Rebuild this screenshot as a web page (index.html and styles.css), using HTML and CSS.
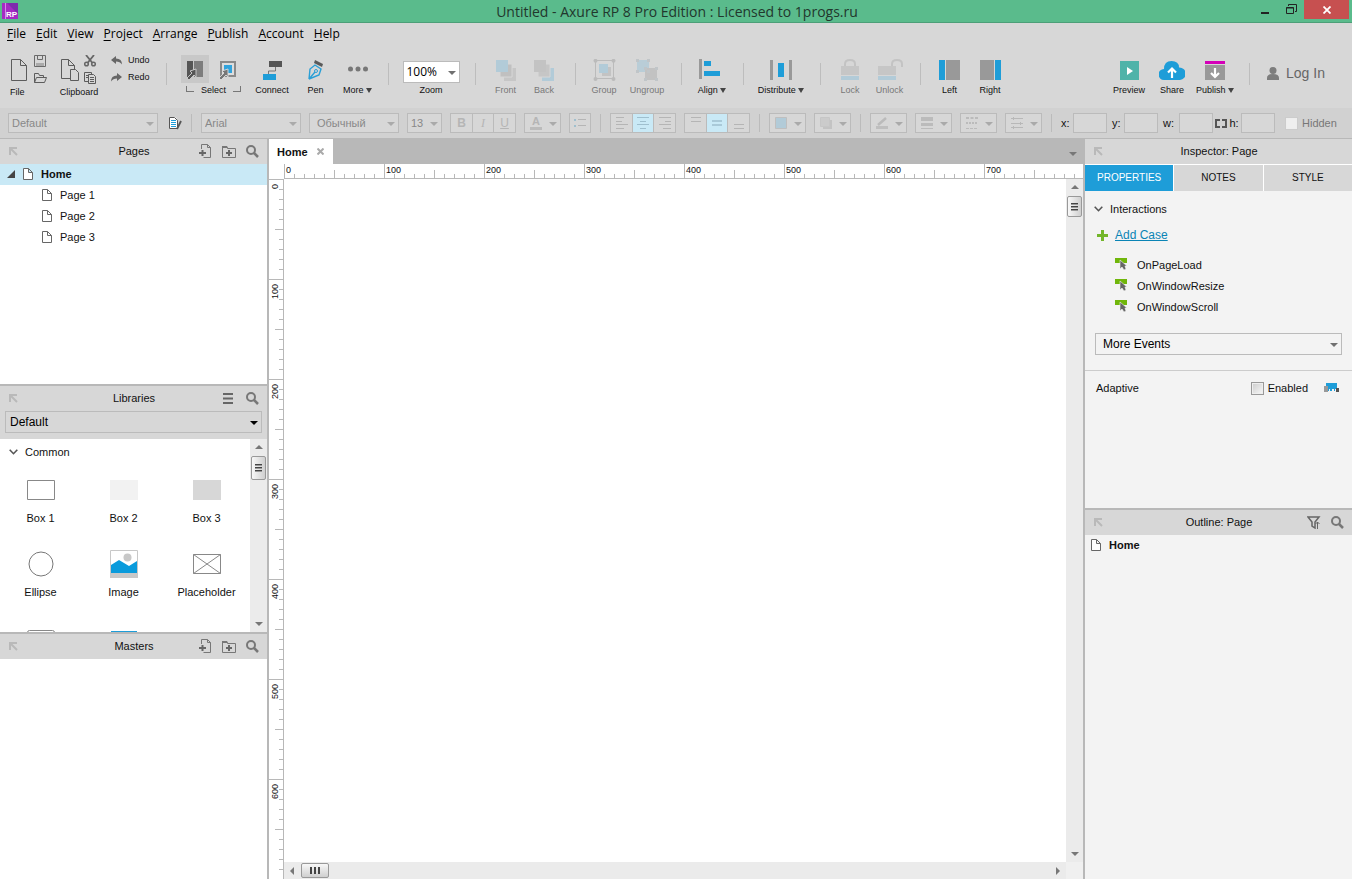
FILE: index.html
```html
<!DOCTYPE html>
<html lang="en">
<head>
<meta charset="utf-8">
<title>Untitled - Axure RP 8 Pro Edition</title>
<link rel="stylesheet" href="styles.css">
</head>
<body>
<svg class="sprite" aria-hidden="true">
  <symbol id="pin" viewBox="0 0 9 9"><path d="M1 8V1h7M1.500 1.500L8 8" fill="none" stroke="#b9b9b9" stroke-width="2"/></symbol>
  <symbol id="page" viewBox="0 0 10 12"><path d="M.5.5h5l4 4v7h-9zM5.5.5v4h4" fill="#fff" stroke="#666"/></symbol>
  <symbol id="addpage" viewBox="0 0 13 14"><path d="M2.500 5V.5h6l3 3v10h-7M8.500.5v3h3" fill="none" stroke="#777"/><path d="M0 9h7M3.500 6v6" stroke="#666" stroke-width="2"/></symbol>
  <symbol id="addfolder" viewBox="0 0 14 13"><path d="M.5 12.500V1.500h4l1 2h8v9z" fill="none" stroke="#777"/><path d="M0 1h5l1 2H0z" fill="#777"/><path d="M4 8h6M7 5v6" stroke="#666" stroke-width="2"/></symbol>
  <symbol id="search" viewBox="0 0 13 13"><circle cx="5" cy="5" r="4" fill="none" stroke="#777" stroke-width="2"/><path d="M8 8l4 4" stroke="#777" stroke-width="2.500"/></symbol>
  <symbol id="chev" viewBox="0 0 9 6"><path d="M.7.7l3.800 4 3.800-4" fill="none" stroke="#555" stroke-width="1.600"/></symbol>
  <symbol id="event" viewBox="0 0 13 13"><path d="M0 0h12v5H0z" fill="#70b60a"/><path d="M5 2v9l2-2 2 3 2-1-1-3h2z" fill="#666" stroke="#f3f3f3" stroke-width=".6"/></symbol>
</svg>

<header class="titlebar">
  <svg class="logo" width="16" height="16" viewBox="0 0 16 16"><path d="M0 0h16v16H0z" fill="#a52ac4"/><path d="M5 0h11v11z" fill="#7e2bad"/><path d="M3 0h1v16H3z" fill="#d58be5"/><text class="logo-text" x="4" y="14">RP</text></svg>
  <h1 class="title">Untitled - Axure RP 8 Pro Edition : Licensed to 1progs.ru</h1>
  <div class="window-buttons">
    <button class="winbtn" aria-label="Minimize"><svg width="8" height="12"><path d="M0 8h8v2H0z" fill="#222"/></svg></button>
    <button class="winbtn" aria-label="Restore"><svg width="11" height="11"><path d="M2.500 2V.500h8v7H9M.5 3.500h7v6h-7zM.5 4h7" fill="none" stroke="#222"/></svg></button>
    <button class="winbtn close" aria-label="Close"><svg width="8" height="8"><path d="M.5.5l7 7m0-7l-7 7" stroke="#fff" stroke-width="1.800"/></svg></button>
  </div>
</header>

<nav class="menubar">
  <button><u>F</u>ile</button><button><u>E</u>dit</button><button><u>V</u>iew</button><button><u>P</u>roject</button><button><u>A</u>rrange</button><button><u>P</u>ublish</button><button><u>A</u>ccount</button><button><u>H</u>elp</button>
</nav>

<div class="toolbar">
  <div class="group file">
    <div class="group-icons">
      <button aria-label="New"><svg width="18" height="24"><path d="M1.500 1.500h9l6 6v15h-15zM10.500 1.500v6h6" fill="none" stroke="#5c5c5c"/></svg></button>
      <div class="pair">
        <button aria-label="Save"><svg width="14" height="12"><path d="M1.500.5h11v11h-11zM4.500.5v4h5v-4" fill="none" stroke="#6a6a6a"/><path d="M3 8h8v3H3z" fill="#aaa"/></svg></button>
        <button aria-label="Open"><svg width="14" height="12"><path d="M1.500 10.500v-9h4l1 2h4v2M1.500 10.500l2-5h10l-2 5z" fill="none" stroke="#5c5c5c"/></svg></button>
      </div>
    </div>
    <span>File</span>
  </div>
  <div class="group">
    <div class="group-icons">
      <button aria-label="Paste"><svg width="18" height="24"><path d="M9.500 20.500h-9v-19h7l6 6v4M7.500 1.500v6h6M9.500 11.500h5l3 3v8h-8z" fill="none" stroke="#5c5c5c"/></svg></button>
      <div class="pair">
        <button aria-label="Cut"><svg width="14" height="12"><path d="M3 0l6.500 8M11 0L4.500 8" stroke="#666" stroke-width="1.800"/><circle cx="3.500" cy="9" r="1.800" fill="none" stroke="#666" stroke-width="1.500"/><circle cx="10.500" cy="9" r="1.800" fill="none" stroke="#666" stroke-width="1.500"/></svg></button>
        <button aria-label="Copy"><svg width="14" height="12"><path d="M5 9.500H1.500v-9h7V3M5.500 2.500h5l2 2v7h-7zM7 5.500h4M7 7.500h4M7 9.500h4M3 3.500h2M3 5.500h2" fill="none" stroke="#5c5c5c"/></svg></button>
      </div>
    </div>
    <span>Clipboard</span>
  </div>
  <div class="history">
    <button><svg width="12" height="9"><path d="M0 4l5-4v2.500q6 0 6 6Q9 5.500 5 5.500V8z" fill="#666"/></svg>Undo</button>
    <button><svg width="12" height="9"><path d="M11 4L6 0v2.500q-6 0-6 6Q2 5.500 6 5.500V8z" fill="#666"/></svg>Redo</button>
  </div>
  <i class="sep"></i>
  <div class="select-tools">
    <div class="select-icons">
      <button class="picked" aria-label="Select intersected"><svg width="18" height="22"><path d="M1 3h6v16H1z" fill="#555"/><path d="M8 3h9v16H8z" fill="#7d7d7d"/><path d="M10 11v8l-2-2-5 5-2-2 5-5-2-2z" fill="#555" stroke="#d0d0d0" stroke-width=".9"/></svg></button>
      <button aria-label="Select contained"><svg width="18" height="22"><path d="M2 3h16v16H2z" fill="#8a8a8a"/><path d="M4 5h12v12H4z" fill="#ddd"/><path d="M6 7h8v8H6z" fill="#31a3dc"/><path d="M10 11v8l-2-2-5 5-2-2 5-5-2-2z" fill="#777" stroke="#ddd" stroke-width=".9"/></svg></button>
    </div>
    <div class="select-label"><i class="hook left"></i><span>Select</span><i class="hook right"></i></div>
  </div>
  <button class="tool"><svg width="20" height="22"><path d="M7 2h13v6H7z" fill="#555"/><path d="M13.500 8v4h-7v3" fill="none" stroke="#777"/><path d="M1 15h13v6H1z" fill="#1e9dd8"/></svg>Connect</button>
  <button class="tool"><svg width="18" height="22"><path d="M8 1l8 4-1 3-8-4z" fill="#5a5a5a"/><path d="M2 20l1-10 5-4 6 4-2 6-10 4 6-7" fill="none" stroke="#2a9fd6" stroke-width="1.400"/><circle cx="9" cy="12" r="1.500" fill="none" stroke="#2a9fd6"/></svg>Pen</button>
  <button class="tool"><svg width="22" height="22"><g fill="#777"><circle cx="3.500" cy="10" r="2.500"/><circle cx="11" cy="10" r="2.500"/><circle cx="18.500" cy="10" r="2.500"/></g></svg><span>More <i class="down"></i></span></button>
  <i class="sep"></i>
  <div class="zoom"><span class="pick dark"><select id="zoom"><option>100%</option></select></span><label for="zoom">Zoom</label></div>
  <i class="sep"></i>
  <button class="tool" disabled><svg width="20" height="22"><path d="M8 9h12v13H8z" fill="#c6c6c6"/><path d="M4 5h12v13H4z" fill="#c0c0c0" stroke="#d7d7d7"/><path d="M0 1h12v12H0z" fill="#b2cbd8"/></svg>Front</button>
  <button class="tool" disabled><svg width="20" height="22"><path d="M8 9h12v13H8z" fill="#b2cbd8"/><path d="M4 5h12v13H4z" fill="#c6c6c6" stroke="#d7d7d7"/><path d="M0 1h12v12H0z" fill="#c3c3c3"/></svg>Back</button>
  <i class="sep"></i>
  <button class="tool" disabled><svg width="24" height="22"><path d="M3.500 1.500h18v18h-18z" fill="none" stroke="#bbb"/><path d="M10 8h9v9h-9z" fill="#c3c3c3"/><path d="M7 5h9v9H7z" fill="#b2cbd8"/><g fill="#bbb"><circle cx="3.500" cy="1.800" r="2"/><circle cx="21.500" cy="1.800" r="2"/><circle cx="3.500" cy="20" r="2"/><circle cx="21.500" cy="20" r="2"/></g></svg>Group</button>
  <button class="tool" disabled><svg width="24" height="22"><path d="M2 1h12v12H2z" fill="#b9cdd7"/><path d="M10 9h12v12H10z" fill="#c2c2c2"/><path d="M1 0h3v3H1zM12 0h3v3h-3zM1 11h3v3H1zM12 11h3v3h-3zM9 8h3v3H9zM20 8h3v3h-3zM9 19h3v3H9zM20 19h3v3h-3z" fill="#c0c5c8"/></svg>Ungroup</button>
  <i class="sep"></i>
  <button class="tool"><svg width="26" height="22"><path d="M0 0h3v20H0z" fill="#999"/><path d="M5 2h7v5H5zM5 12h16v5H5z" fill="#1e9dd8"/></svg><span>Align <i class="down"></i></span></button>
  <i class="sep"></i>
  <button class="tool"><svg width="22" height="22"><path d="M0 1h3v20H0zM19 1h3v20h-3z" fill="#999"/><path d="M8 4h6v14H8z" fill="#1e9dd8"/></svg><span>Distribute <i class="down"></i></span></button>
  <i class="sep"></i>
  <button class="tool" disabled><svg width="18" height="22"><path d="M4 7V5q0-4 5-4t5 4v2" fill="none" stroke="#c3c3c3" stroke-width="2"/><path d="M0 7h18v9H0z" fill="#c6c6c6"/><path d="M0 17h18v4H0z" fill="#b2cbd8"/></svg>Lock</button>
  <button class="tool" disabled><svg width="26" height="22"><path d="M15 7V5q0-4 5-4t5 4v3" fill="none" stroke="#c3c3c3" stroke-width="2"/><path d="M1 7h18v9H1z" fill="#c6c6c6"/><path d="M1 17h18v4H1z" fill="#b2cbd8"/></svg>Unlock</button>
  <i class="sep"></i>
  <button class="tool"><svg width="21" height="22"><path d="M0 1h6v20H0z" fill="#1e9dd8"/><path d="M7 1h14v20H7z" fill="#999"/></svg>Left</button>
  <button class="tool"><svg width="21" height="22"><path d="M15 1h6v20h-6z" fill="#1e9dd8"/><path d="M0 1h14v20H0z" fill="#999"/></svg>Right</button>
  <span></span>
  <button class="tool"><svg width="19" height="22"><path d="M0 2h19v19H0z" fill="#4fb3a9"/><path d="M7 8l6 4-6 4z" fill="#fff"/></svg>Preview</button>
  <button class="tool"><svg width="26" height="22"><path d="M5 21a5.500 5.500 0 0 1 0-11Q5 2 12.500 2T20 8.500a6 6 0 0 1 1 12.500z" fill="#1e9dd8"/><path d="M13 19v-9M9 13.500l4-4 4 4" fill="none" stroke="#fff" stroke-width="2.200"/></svg>Share</button>
  <button class="tool"><svg width="20" height="22"><path d="M0 2h20v3H0z" fill="#d400b8"/><path d="M0 6h20v15H0z" fill="#999"/><path d="M10 9v9M6 14l4 4 4-4" fill="none" stroke="#fff" stroke-width="2.200"/></svg><span>Publish <i class="down"></i></span></button>
  <i class="sep"></i>
  <button class="login"><svg width="12" height="13"><circle cx="6" cy="3.500" r="3.500" fill="#7d7d7d"/><path d="M0 13v-2q0-4 6-4t6 4v2z" fill="#7d7d7d"/></svg>Log In</button>
</div>

<div class="formatbar">
  <span class="pick w150"><select aria-label="Style" disabled><option>Default</option></select></span>
  <button class="style-edit" aria-label="Style manager"><svg width="14" height="14"><path d="M1 1h6l2 2v10H1z" fill="#fff"/><path d="M3 4h5v1H3zM3 6h5v1H3zM3 8h5v1H3zM3 10h5v1H3z" fill="#1e9dd8"/><path d="M1.500 1.500h5l3 3v8h-8z" fill="none" stroke="#555"/><path d="M13 5l-4 8" stroke="#555" stroke-width="1.800"/></svg></button>
  <i class="bar"></i>
  <span class="pick w100"><select aria-label="Font" disabled><option>Arial</option></select></span>
  <span class="pick w90 indent"><select aria-label="Weight" disabled><option>Обычный</option></select></span>
  <span class="pick w35"><select aria-label="Size" disabled><option>13</option></select></span>
  <div class="segment">
    <button disabled aria-label="Bold"><b>B</b></button><button disabled aria-label="Italic"><i class="italic">I</i></button><button disabled aria-label="Underline"><u>U</u></button>
  </div>
  <button class="drop" disabled aria-label="Text colour"><span class="fontcolor">A</span></button>
  <div class="segment single"><button disabled aria-label="Bullets"><svg width="12" height="10"><path d="M0 1h2v2H0zM0 7h2v2H0z" fill="#9fbfce"/><path d="M4 1.500h8M4 7.500h8" stroke="#b5b5b5"/></svg></button></div>
  <i class="bar"></i>
  <div class="segment">
    <button disabled aria-label="Align left"><svg width="12" height="12"><path d="M0 .5h8M0 4.500h6M0 7.500h12M0 11.500h8" stroke="#b5b5b5"/></svg></button><button class="on" disabled aria-label="Align centre"><svg width="12" height="12"><path d="M0 .5h12M3 4.500h6M0 7.500h12M3 11.500h6" stroke="#9fbfce"/></svg></button><button disabled aria-label="Align right"><svg width="12" height="12"><path d="M0 .5h12M6 4.500h6M0 7.500h12M4 11.500h8" stroke="#b5b5b5"/></svg></button>
  </div>
  <div class="segment">
    <button disabled aria-label="Align top"><svg width="12" height="12"><path d="M1 .5h10M1 4.500h10" stroke="#b5b5b5"/></svg></button><button class="on" disabled aria-label="Align middle"><svg width="12" height="12"><path d="M1 4h10M1 8h10" stroke="#9fbfce" stroke-width="1.500"/></svg></button><button disabled aria-label="Align bottom"><svg width="12" height="12"><path d="M1 7.500h10M1 11.500h10" stroke="#b5b5b5"/></svg></button>
  </div>
  <i class="bar"></i>
  <button class="drop" disabled aria-label="Fill"><svg width="12" height="12"><path d="M.5.5h11v11H.5z" fill="#b2cbd8" stroke="#bfbfbf"/></svg></button>
  <button class="drop" disabled aria-label="Shadow"><svg width="12" height="12"><path d="M3 3h9v9H3z" fill="#c3c3c3"/><path d="M.5.5h9v9h-9z" fill="#cbcbcb" stroke="#c6c6c6"/></svg></button>
  <i class="bar"></i>
  <button class="drop" disabled aria-label="Line colour"><svg width="12" height="12"><path d="M2 8l8-7" stroke="#bbb" stroke-width="2.500"/><path d="M0 9h12v3H0z" fill="#bfbfbf"/></svg></button>
  <button class="drop" disabled aria-label="Line width"><svg width="12" height="12"><path d="M0 0h12v4H0zM0 6h12v3H0zM0 11h12v1H0z" fill="#bbb"/></svg></button>
  <button class="drop" disabled aria-label="Line style"><svg width="12" height="12"><path d="M0 1h12" stroke="#bbb" stroke-width="2" stroke-dasharray="3 1.500"/><path d="M0 6h12" stroke="#bbb" stroke-width="2" stroke-dasharray="2 1"/><path d="M0 11.500h12" stroke="#bbb" stroke-dasharray="3 1"/></svg></button>
  <button class="drop" disabled aria-label="Arrow style"><svg width="12" height="12"><path d="M0 1.500h12M0 6.500h12M0 10.500h12M2.500 0v3M9.500 5v3M2.500 9v3" stroke="#b8b8b8"/></svg></button>
  <i class="bar"></i>
  <label class="coord">x:<input type="text" disabled></label>
  <label class="coord">y:<input type="text" disabled></label>
  <label class="coord">w:<input type="text" disabled></label>
  <label class="coord linked"><svg width="12" height="9"><path d="M5 1H1v7h4M7 1h4v7H7" fill="none" stroke="#555" stroke-width="2"/></svg>h:<input type="text" disabled></label>
  <label class="hidden-check"><input type="checkbox" class="box plain" disabled>Hidden</label>
</div>

<main class="workspace">
  <aside class="side left-side">
    <section class="panel pages">
      <header class="panel-head"><svg width="9" height="9"><use href="#pin"/></svg><h2>Pages</h2>
        <div class="actions"><button aria-label="Add page"><svg width="13" height="14"><use href="#addpage"/></svg></button><button aria-label="Add folder"><svg width="14" height="13"><use href="#addfolder"/></svg></button><button aria-label="Search pages"><svg width="13" height="13"><use href="#search"/></svg></button></div>
      </header>
      <ul class="tree">
        <li class="row root"><svg width="8" height="8"><path d="M8 0v8H0z" fill="#444"/></svg><svg width="10" height="12"><use href="#page"/></svg>Home</li>
        <li class="row child"><svg width="10" height="12"><use href="#page"/></svg>Page 1</li>
        <li class="row child"><svg width="10" height="12"><use href="#page"/></svg>Page 2</li>
        <li class="row child"><svg width="10" height="12"><use href="#page"/></svg>Page 3</li>
      </ul>
    </section>
    <section class="panel libraries">
      <header class="panel-head"><svg width="9" height="9"><use href="#pin"/></svg><h2>Libraries</h2>
        <div class="actions wide"><button aria-label="Library options"><svg width="10" height="11"><path d="M0 1h10M0 5.500h10M0 10h10" stroke="#666" stroke-width="2"/></svg></button><button aria-label="Search libraries"><svg width="13" height="13"><use href="#search"/></svg></button></div>
      </header>
      <div class="library-pick"><span class="pick black"><select aria-label="Library"><option>Default</option></select></span></div>
      <div class="library-body">
        <div class="widgets">
          <h3><svg width="9" height="6"><use href="#chev"/></svg>Common</h3>
          <ul class="widget-grid">
            <li><svg width="28" height="28"><path d="M.5 4.500h27v19H.5z" fill="#fff" stroke="#888"/></svg>Box 1</li>
            <li><svg width="28" height="28"><path d="M0 4h28v20H0z" fill="#f2f2f2"/></svg>Box 2</li>
            <li><svg width="28" height="28"><path d="M0 4h28v20H0z" fill="#d7d7d7"/></svg>Box 3</li>
            <li><svg width="28" height="28"><circle cx="14" cy="14" r="12" fill="#fff" stroke="#777"/></svg>Ellipse</li>
            <li><svg width="28" height="28"><path d="M.5.5h27v27H.5z" fill="#fff" stroke="#c8c8c8"/><circle cx="17.500" cy="7.500" r="4" fill="#c8c8c8"/><path d="M1 15l8-5 10 6 8-5v12H1z" fill="#0a9bdc"/><path d="M0 23h28v5H0z" fill="#c8c8c8"/></svg>Image</li>
            <li><svg width="28" height="28"><path d="M.5 4.500h27v19H.5zM.5 4.500l27 19M27.500 4.500l-27 19" fill="none" stroke="#888"/></svg>Placeholder</li>
            <li><svg width="28" height="28"><rect x=".5" y="6.500" width="27" height="19" rx="2" fill="#fff" stroke="#888"/></svg></li>
            <li><svg width="28" height="28"><path d="M1 7h26v19H1z" fill="#1e9dd8"/></svg></li>
          </ul>
        </div>
        <div class="vscroll"><i class="arrow up"></i><i class="thumb"></i><i class="arrow dn"></i></div>
      </div>
    </section>
    <section class="panel masters">
      <header class="panel-head"><svg width="9" height="9"><use href="#pin"/></svg><h2>Masters</h2>
        <div class="actions"><button aria-label="Add master"><svg width="13" height="14"><use href="#addpage"/></svg></button><button aria-label="Add master folder"><svg width="14" height="13"><use href="#addfolder"/></svg></button><button aria-label="Search masters"><svg width="13" height="13"><use href="#search"/></svg></button></div>
      </header>
    </section>
  </aside>

  <section class="editor">
    <div class="tabs"><div class="tab">Home<button aria-label="Close tab"><svg width="7" height="7"><path d="M.5.5l6 6m0-6l-6 6" stroke="#aaa" stroke-width="2"/></svg></button></div><button class="tab-menu" aria-label="Open tabs"><i class="arrow dn"></i></button></div>
    <div class="hruler"><span>0</span><span>100</span><span>200</span><span>300</span><span>400</span><span>500</span><span>600</span><span>700</span></div>
    <div class="board">
      <div class="vruler"><span>0</span><span>100</span><span>200</span><span>300</span><span>400</span><span>500</span><span>600</span></div>
      <div class="canvas"></div>
      <div class="vscroll"><i class="arrow up"></i><i class="thumb short"></i><i class="arrow dn"></i></div>
      <div class="hscroll"><i class="arrow lt"></i><i class="thumb"></i><i class="arrow rt"></i></div>
    </div>
  </section>

  <aside class="side right-side">
    <section class="panel inspector">
      <header class="panel-head"><svg width="9" height="9"><use href="#pin"/></svg><h2>Inspector: Page</h2></header>
      <div class="inspector-tabs"><button class="active">PROPERTIES</button><button>NOTES</button><button>STYLE</button></div>
      <div class="interactions">
        <h3><svg width="9" height="6"><use href="#chev"/></svg>Interactions</h3>
        <div class="add"><svg width="11" height="11"><path d="M0 5.500h11M5.500 0v11" stroke="#73b62a" stroke-width="3"/></svg><a href="#">Add Case</a></div>
        <ul class="events">
          <li><svg width="13" height="13"><use href="#event"/></svg>OnPageLoad</li>
          <li><svg width="13" height="13"><use href="#event"/></svg>OnWindowResize</li>
          <li><svg width="13" height="13"><use href="#event"/></svg>OnWindowScroll</li>
        </ul>
        <span class="pick dark more"><select aria-label="More Events"><option>More Events</option></select></span>
      </div>
      <div class="adaptive"><span>Adaptive</span><label><input type="checkbox" class="box">Enabled</label><button aria-label="Manage adaptive views"><svg width="16" height="10"><path d="M2 0h11v6h-2v2H4V3H2z" fill="#1e9dd8"/><path d="M0 3h4v6H0z" fill="#999"/><path d="M5 6h1v2H5zM8 6h2v2H8z" fill="#f3f3f3"/><path d="M12 5h3v4h-3z" fill="#555"/></svg></button></div>
    </section>
    <section class="panel outline">
      <header class="panel-head"><svg width="9" height="9"><use href="#pin"/></svg><h2>Outline: Page</h2>
        <div class="actions"><button aria-label="Filter"><svg width="14" height="13"><path d="M1 1h11L8 6v6l-3-2V6z" fill="none" stroke="#666" stroke-width="1.500"/><path d="M10.500 13V6M8.500 8l2-2 2 2" fill="none" stroke="#666"/></svg></button><button aria-label="Search outline"><svg width="13" height="13"><use href="#search"/></svg></button></div>
      </header>
      <ul class="tree"><li class="row item"><svg width="10" height="12"><use href="#page"/></svg>Home</li></ul>
    </section>
  </aside>
</main>
</body>
</html>
```
FILE: styles.css
```css
* { box-sizing: border-box; }
body { margin: 0; height: 100vh; display: flex; flex-direction: column; overflow: hidden; background: #d7d7d7; color: #111; font: 11px/14px "Liberation Sans", Arial, sans-serif; }
button, input, select { font: inherit; color: inherit; }
button { border: 0; padding: 0; background: none; white-space: nowrap; }
ul { list-style: none; margin: 0; padding: 0; }
h1, h2, h3 { margin: 0; font-size: 11px; font-weight: normal; }
svg { display: block; flex: none; }
.sprite { position: absolute; width: 0; height: 0; }

.titlebar { flex: none; height: 23px; display: grid; grid-template-columns: 110px 1fr 110px; background: #5abb8c; border-bottom: 1px solid #4c9f78; padding-left: 2px; }
.logo { margin-top: 3px; }
.logo-text { font: bold 8px "Liberation Sans", Arial, sans-serif; fill: #fff; }
.title { text-align: center; font: 14px/23px "Open Sans", sans-serif; color: #22372d; }
.window-buttons { display: flex; justify-content: flex-end; padding-right: 3px; }
.winbtn { width: 26px; height: 19px; display: flex; align-items: center; justify-content: center; }
.close { width: 45px; background: #c75050; }

.menubar { flex: none; height: 22px; display: flex; gap: 10px; padding-left: 7px; font: 12px/22px "Open Sans", sans-serif; color: #000; }
.menubar u { text-underline-offset: 2px; }

.toolbar { flex: none; height: 63px; display: grid; grid-template-columns: 56px 46px 63px 3px 83px 42px 45px 39px 22px 64px 24px 37px 40px 22px 36px 50px 18px 44px 18px 58px 20px 40px 39px 22px 37px 44px 1fr 42px 44px 42px 26px 90px; font-size: 9px; line-height: 12px; }
.tool { display: flex; flex-direction: column; align-items: center; padding-top: 14px; gap: 3px; align-self: start; }
.tool:disabled { color: #777; }
.sep { justify-self: center; width: 1px; height: 22px; margin-top: 18px; background: #bdbdbd; }
.down { display: inline-block; border: 3px solid transparent; border-top: 5px solid #444; border-bottom: 0; }
.group { display: flex; flex-direction: column; align-items: center; padding-top: 9px; }
.group-icons { display: flex; gap: 4px; align-items: center; height: 31px; }
.group > span { margin-top: 1px; }
.pair { display: flex; flex-direction: column; gap: 5px; }
.file { align-items: flex-start; padding-left: 10px; }
.file .group-icons { gap: 5px; }
.history { display: flex; flex-direction: column; gap: 5px; padding: 9px 0 0 9px; align-items: flex-start; }
.history button { display: flex; align-items: center; gap: 5px; }
.select-tools { padding: 10px 10px 0 13px; }
.select-icons { display: flex; gap: 4px; }
.select-icons button { width: 30px; height: 28px; display: flex; align-items: center; justify-content: center; }
.picked { background: #c8c8c8; }
.select-label { display: flex; justify-content: space-between; padding: 1px 0 0 5px; }
.hook { width: 8px; height: 6px; margin-top: 2px; border-bottom: 1px solid #777; }
.hook.left { border-left: 1px solid #777; }
.hook.right { border-right: 1px solid #777; }
.zoom { display: flex; flex-direction: column; align-items: center; padding-top: 16px; gap: 1px; }
.zoom .pick { width: 57px; height: 22px; background: #fff; font: 12px/20px "Open Sans", sans-serif; color: #000; }
.login { display: flex; align-items: center; gap: 7px; height: 28px; margin-top: 14px; padding-left: 5px; font: 14px/20px "Liberation Sans", Arial, sans-serif; color: #666; }

.pick { position: relative; display: block; flex: none; height: 20px; border: 1px solid #bbb; color: #888; }
.pick select { appearance: none; display: block; width: 100%; height: 100%; border: 0; padding: 0 14px 0 3px; margin: 0; background: none; color: inherit; opacity: 1; }
.pick::after { content: ""; position: absolute; right: 3px; top: 50%; margin-top: -1px; border: 4px solid transparent; border-top-color: #aaa; border-bottom: 0; pointer-events: none; }
.dark::after { border-top-color: #707070; }
.black::after { border-top-color: #000; }
.w150 { width: 150px; } .w100 { width: 100px; } .w90 { width: 90px; } .w35 { width: 35px; }
.indent select { padding-left: 7px; }

.formatbar { flex: none; height: 31px; display: flex; align-items: center; gap: 8px; padding-left: 8px; background: #d1d1d1; border-bottom: 1px solid #b8b8b8; }
.formatbar .pick, .drop, .segment, .coord input { background: #d7d7d7; }
.style-edit { width: 16px; display: flex; justify-content: flex-end; }
.bar { flex: none; width: 3px; height: 18px; border-right: 1px solid #bbb; margin-left: -1px; margin-right: 1px; }
.segment { display: flex; height: 20px; border: 1px solid #bbb; }
.segment button { width: 21px; display: flex; align-items: center; justify-content: center; color: #b5b5b5; font-size: 12px; }
.segment button:nth-child(2) { width: 22px; border: 1px solid #bbb; border-width: 0 1px; }
.segment.single button { width: 20px; }
.segment .on { background: #c9e9f6; }
.italic { font-family: "Liberation Serif", serif; }
.drop { position: relative; width: 37px; height: 20px; padding-left: 5px; border: 1px solid #bbb; display: flex; align-items: center; }
.drop::after { content: ""; position: absolute; right: 3px; top: 8px; border: 4px solid transparent; border-top-color: #aaa; border-bottom: 0; }
.fontcolor { width: 12px; border-bottom: 3px solid #bbb; font: bold 11px/11px "Liberation Sans", Arial, sans-serif; color: #b5b5b5; }
.coord { display: flex; align-items: center; justify-content: space-between; width: 46px; gap: 3px; margin-right: -3px; }
.coord input { width: 34px; height: 20px; border: 1px solid #bbb; padding: 0; }
.coord:has(+ .linked) { width: 50px; }
.linked { width: 60px; gap: 2px; margin-left: -3px; margin-right: 2px; }
.hidden-check { display: flex; align-items: center; gap: 4px; color: #777; }
.box { appearance: none; margin: 0; width: 13px; height: 13px; border: 1px solid #999; background: linear-gradient(135deg, #ccc, #f8f8f8); box-shadow: inset 0 0 0 1px #eee; }
.plain { border-color: #ccc; background: #efefef; }

.workspace { flex: 1; min-height: 0; display: grid; grid-template-columns: 269px minmax(0, 1fr) 269px; }
.side { display: flex; flex-direction: column; min-height: 0; }
.left-side { border-right: 2px solid #b8b8b8; background: #fff; }
.right-side { border-left: 2px solid #b8b8b8; background: #f3f3f3; }
.panel { min-height: 0; }
.panel + .panel { border-top: 2px solid #b8b8b8; }
.pages { flex: 0 0 245px; }
.libraries { flex: 0 0 248px; display: flex; flex-direction: column; }
.masters, .outline { flex: 1; }
.inspector { flex: 0 0 369px; }
.panel-head { flex: none; height: 25px; display: grid; grid-template-columns: 1fr auto 1fr; align-items: center; padding: 0 8px 1px 9px; background: #d7d7d7; }
.actions { display: flex; justify-content: flex-end; align-items: center; gap: 10px; }
.wide { gap: 13px; }
.row { height: 21px; display: flex; align-items: center; gap: 8px; padding-bottom: 1px; }
.root { background: #c9e9f6; padding-left: 7px; font-weight: bold; }
.child { padding-left: 42px; }
.item { padding-left: 6px; font-weight: bold; }
.library-pick { padding: 0 5px 6px; background: #d7d7d7; font-size: 12px; }
.library-pick .pick { height: 22px; color: #000; }
.library-pick select { padding-left: 4px; }
.library-body { flex: 1; min-height: 0; display: flex; }
.widgets { flex: 1; overflow: hidden; }
h3 { display: flex; align-items: center; gap: 7px; }
.widgets h3 { height: 27px; padding-left: 9px; padding-bottom: 1px; }
.widget-grid { display: grid; grid-template-columns: repeat(3, 83px); grid-auto-rows: 74px; margin-left: -1px; padding-top: 10px; }
.widget-grid li { display: flex; flex-direction: column; align-items: center; gap: 7px; }

.vscroll { width: 17px; display: flex; flex-direction: column; align-items: center; padding: 6px 0; background: #ebebeb; }
.vscroll .dn, .hscroll .rt { margin-top: auto; }
.arrow { flex: none; border: 4px solid transparent; }
.up { border-top: 0; border-bottom-color: #777; }
.dn { border-bottom: 0; border-top-color: #777; }
.lt { border-left: 0; border-right-color: #777; }
.rt { border-right: 0; border-left-color: #777; }
.thumb { flex: none; width: 15px; height: 24px; margin-top: 7px; border: 1px solid #999; border-radius: 2px; background: repeating-linear-gradient(#444 0 2px, transparent 2px 3px) center / 7px 8px no-repeat, linear-gradient(90deg, #f8f8f8, #cfcfcf); }
.vscroll .thumb { background: repeating-linear-gradient(#444 0 1px, #999 1px 2px, transparent 2px 3px) center / 7px 8px no-repeat, linear-gradient(90deg, #f8f8f8, #cfcfcf); }
.short { height: 21px; }

.editor { display: flex; flex-direction: column; min-width: 0; background: #fff; }
.tabs { flex: none; height: 25px; display: flex; justify-content: space-between; background: #b8b8b8; }
.tab { width: 64px; display: flex; align-items: center; gap: 9px; padding-left: 8px; background: #fff; font-weight: bold; }
.tab-menu { display: flex; align-items: center; padding: 4px 6px 0; }
.hruler { flex: none; height: 15px; margin-left: 15px; display: flex; overflow: hidden; border-bottom: 1px solid #b8b8b8; background: repeating-linear-gradient(90deg, #b8b8b8 0 1px, transparent 1px 100px) 0 0 / 100% 14px no-repeat, repeating-linear-gradient(90deg, #b8b8b8 0 1px, transparent 1px 50px) 0 6px / 100% 8px no-repeat, repeating-linear-gradient(90deg, #b8b8b8 0 1px, transparent 1px 10px) 0 10px / 100% 4px no-repeat; font-size: 9px; line-height: 12px; }
.hruler span { flex: 0 0 100px; padding-left: 2px; }
.board { flex: 1; min-height: 0; display: grid; grid-template-columns: 15px 1fr 17px; grid-template-rows: minmax(0, 1fr) 17px; background: #f0f0f0; }
.canvas { background: #fff; }
.vruler { grid-row: 1 / 3; overflow: hidden; border-right: 1px solid #b8b8b8; background: repeating-linear-gradient(#b8b8b8 0 1px, transparent 1px 100px) 0 0 / 14px 100% no-repeat, repeating-linear-gradient(#b8b8b8 0 1px, transparent 1px 50px) 6px 0 / 8px 100% no-repeat, repeating-linear-gradient(#b8b8b8 0 1px, transparent 1px 10px) 10px 0 / 4px 100% no-repeat, #fff; font-size: 9px; line-height: 12px; }
.vruler span { display: block; height: 100px; width: 12px; padding-bottom: 5px; writing-mode: vertical-rl; transform: rotate(180deg); text-align: right; }
.hscroll { grid-column: 2; display: flex; align-items: center; padding: 0 6px; background: #ebebeb; }
.hscroll .thumb { width: 28px; height: 15px; margin: 0 0 0 7px; background: repeating-linear-gradient(90deg, #444 0 2px, transparent 2px 4px) center / 10px 7px no-repeat, linear-gradient(#f8f8f8, #cfcfcf); }
.hscroll .rt { margin: 0 0 0 auto; }

.inspector-tabs { display: grid; grid-template-columns: repeat(3, 1fr); gap: 1px; padding-top: 1px; height: 27px; background: #fff; }
.inspector-tabs button { background: #d7d7d7; font-size: 10px; }
.inspector-tabs .active { background: #1e9dd8; color: #fff; }
.interactions { padding: 11px 10px 15px; border-bottom: 1px solid #ccc; }
.interactions h3 { margin-left: -1px; }
.add { display: flex; align-items: center; gap: 7px; padding: 12px 0 12px 2px; font-size: 12px; }
.add a { color: #0a84b5; }
.events { padding-left: 20px; }
.events li { height: 21px; display: flex; align-items: center; gap: 9px; }
.more { height: 22px; margin-top: 16px; font-size: 12px; color: #000; }
.more select { padding-left: 7px; }
.adaptive { display: flex; align-items: center; padding: 10px 12px 0 11px; }
.adaptive span { flex: 1; }
.adaptive label { display: flex; align-items: center; gap: 4px; margin-right: 16px; }
```
